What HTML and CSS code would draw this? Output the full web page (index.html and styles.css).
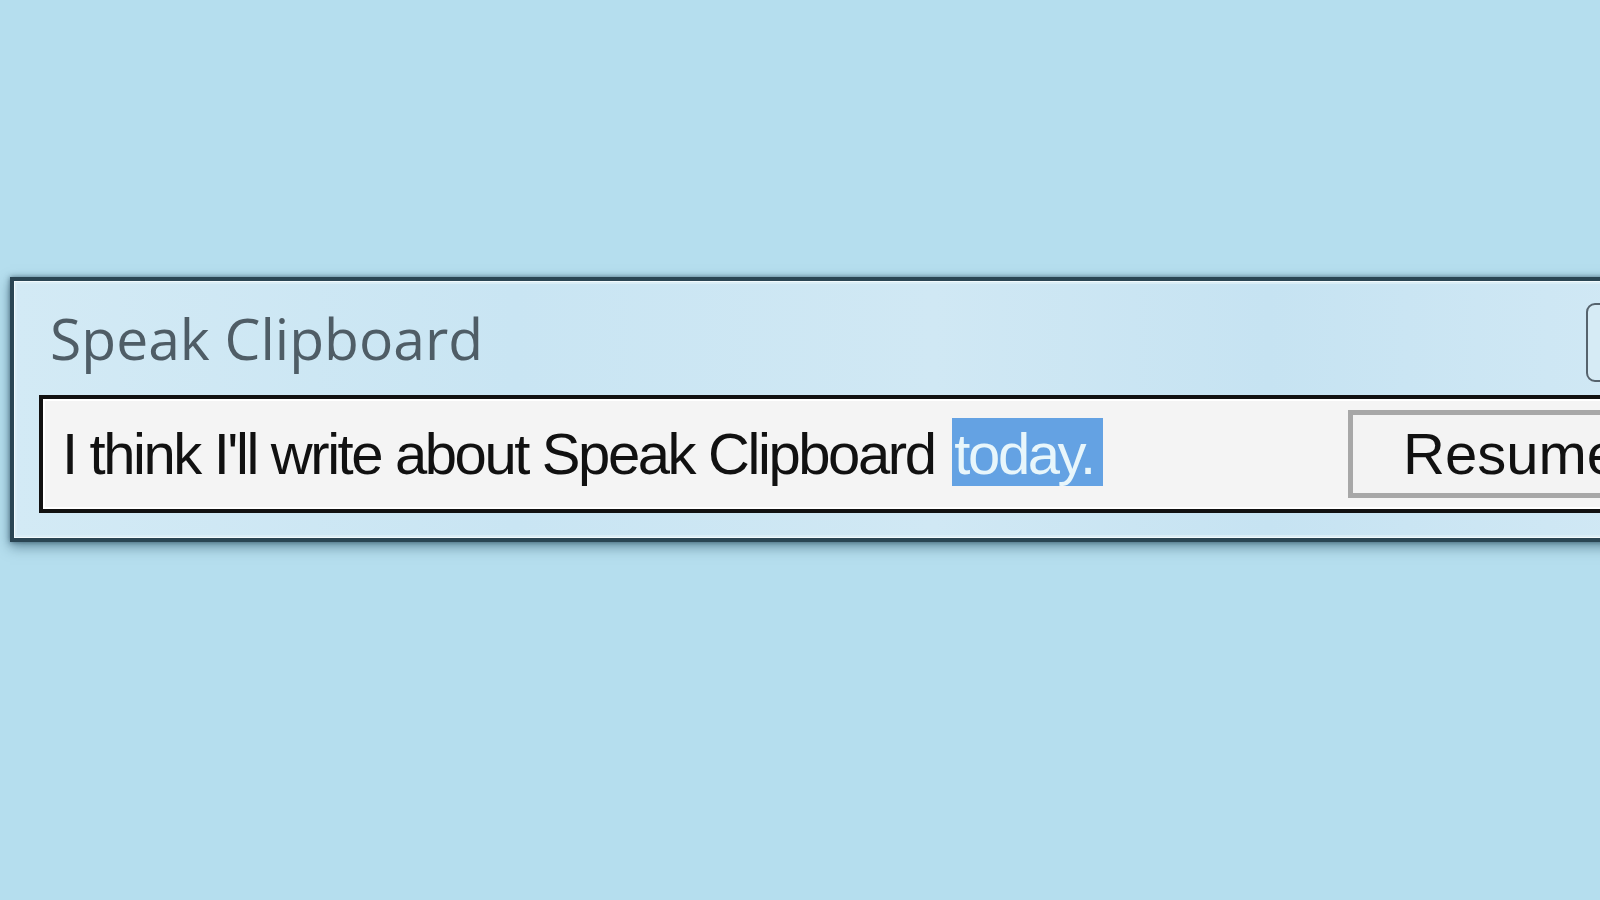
FILE: index.html
```html
<html lang="en">
<head>
    <meta charset="UTF-8">
    <meta name="viewport" content="width=device-width, initial-scale=1.0">
    <title>Speak Clipboard</title>
    <link rel="stylesheet" href="styles.css">
</head>
<body>
    <div class="window">
        <div class="titlebar">
            <div class="title">Speak Clipboard</div>
            <div class="close-btn"></div>
        </div>
        <div class="textbox">
            <div class="text">I think I'll write about Speak Clipboard <span class="selected">today.</span></div>
            <button class="resume">Resume</button>
        </div>
    </div>
</body>
</html>
```

FILE: styles.css
```css
body {
    margin: 0;
    padding: 277px 0 0 10px;
    background: #b5deee;
    overflow: hidden;
    height: 900px;
    box-sizing: border-box;
    font-family: "Liberation Sans", Arial, sans-serif;
}
.window {
    width: 1680px;
    box-sizing: border-box;
    border: 4px solid #2a4553;
    background: linear-gradient(90deg, #d3eaf5 0%, #c9e5f3 30%, #d0e8f4 55%, #c6e3f2 75%, #d2e9f5 100%);
    box-shadow: inset 0 0 0 1px #f2fafd, inset 0 0 0 3px #d9edf6, 0 0 5px rgba(30, 60, 80, 0.6), 0 5px 12px rgba(30, 70, 90, 0.5);
    padding-bottom: 25px;
}
.titlebar {
    display: flex;
    align-items: flex-start;
    padding: 22px 10px 13px 36px;
}
.title {
    font-family: "Open Sans", "Noto Sans", sans-serif;
    font-size: 57px;
    line-height: 70px;
    color: #4f5d66;
    flex: 1;
}
.close-btn {
    width: 90px;
    height: 79px;
    box-sizing: border-box;
    border: 2px solid #56636d;
    border-radius: 9px;
    background: #d6ebf5;
}
.textbox {
    display: flex;
    align-items: center;
    margin: 0 25px;
    height: 118px;
    box-sizing: border-box;
    border: 4px solid #111;
    background: #f4f4f4;
    box-shadow: inset 0 0 0 2px #fff;
    padding-left: 19px;
}
.text {
    font-size: 58px;
    line-height: 58px;
    letter-spacing: -2.4px;
    color: #111;
    white-space: nowrap;
}
.selected {
    background: #64a2e3;
    color: #e8f6fb;
    padding: 3px 9px 0 2px;
    margin-left: 4px;
}
.resume {
    margin-left: auto;
    margin-right: 29px;
    width: 280px;
    height: 88px;
    box-sizing: border-box;
    border: 5px solid #a7a7a7;
    background: #f3f3f3;
    font-family: "Liberation Sans", Arial, sans-serif;
    font-size: 58px;
    line-height: 58px;
    color: #111;
    text-align: left;
    padding: 0 0 0 50px;
}
```
